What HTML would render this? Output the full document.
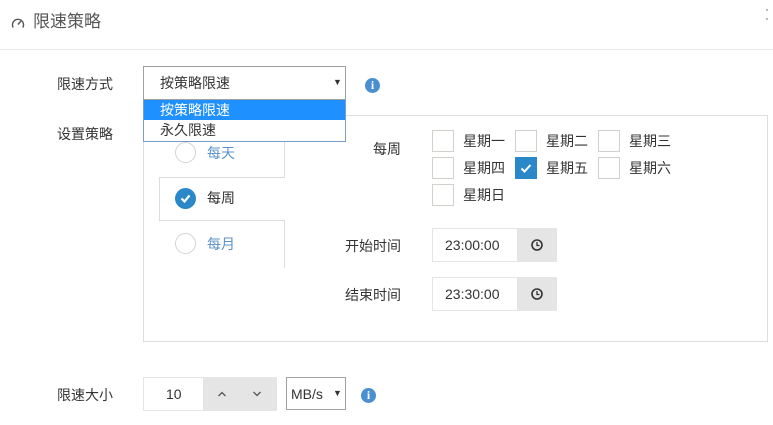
<!DOCTYPE html>
<html><head><meta charset="utf-8"><style>
*{box-sizing:border-box;margin:0;padding:0}
body{width:773px;height:425px;background:#fff;position:relative;overflow:hidden;font-family:"Liberation Sans","Noto Sans CJK SC",sans-serif;font-size:14px;color:#333}
.a{position:absolute}
.lbl{position:absolute;font-size:14px;color:#333;line-height:16px}
.cb{position:absolute;width:22px;height:22px;border:1px solid #d3cfcb;background:#fff}
.cbt{position:absolute;font-size:14px;line-height:16px;color:#333}
.info{position:absolute;width:15px;height:15px;border-radius:50%;background:#4a90d0;color:#fff;font:bold 12px/15px "Liberation Serif",serif;text-align:center}
.radio{position:absolute;width:21px;height:21px;border-radius:50%;border:1px solid #d6d3d0;background:#fff}
</style></head><body>
<svg class="a" style="left:11px;top:16px" width="14" height="14" viewBox="0 0 14 14"><path d="M2.2 11.5A5.5 5.5 0 1 1 11.8 11.5" fill="none" stroke="#555" stroke-width="1.4"/><path d="M7 8.5L9.8 5.2" stroke="#555" stroke-width="1.5"/></svg>
<div class="a" style="left:33px;top:12px;font-size:17px;color:#555;line-height:20px">限速策略</div>
<div class="a" style="left:0;top:49px;width:773px;height:1px;background:#e9e9e9"></div>
<div class="a" style="left:766px;top:9px;width:2px;height:2px;background:#bbb"></div>
<div class="a" style="left:766px;top:18px;width:2px;height:2px;background:#bbb"></div>

<div class="lbl" style="left:57px;top:76px">限速方式</div>
<div class="lbl" style="left:57px;top:126px">设置策略</div>

<div class="a" style="left:143px;top:115px;width:625px;height:227px;border:1px solid #ddd"></div>
<div class="a" style="left:144px;top:116px;width:140px;height:61px;background:#fff"></div>
<div class="a" style="left:284px;top:116px;width:1px;height:62px;background:#ddd"></div>
<div class="a" style="left:159px;top:177px;width:126px;height:1px;background:#ddd"></div>
<div class="a" style="left:159px;top:177px;width:1px;height:44px;background:#ddd"></div>
<div class="a" style="left:159px;top:220px;width:126px;height:1px;background:#ddd"></div>
<div class="a" style="left:284px;top:220px;width:1px;height:48px;background:#ddd"></div>
<div class="radio" style="left:175px;top:142px"></div>
<div class="lbl" style="left:207px;top:145px;color:#5b93c8">每天</div>
<div class="a" style="left:175px;top:188px;width:21px;height:21px;border-radius:50%;background:#2a88c8"></div>
<svg class="a" style="left:175px;top:188px" width="21" height="21"><path d="M6.5 10.5l3 3 5-6" fill="none" stroke="#fff" stroke-width="2.2"/></svg>
<div class="lbl" style="left:207px;top:190px">每周</div>
<div class="radio" style="left:175px;top:233px"></div>
<div class="lbl" style="left:207px;top:236px;color:#5b93c8">每月</div>

<div class="lbl" style="left:373px;top:141px">每周</div>
<div class="cb" style="left:432px;top:130px"></div><div class="cbt" style="left:463px;top:133px">星期一</div>
<div class="cb" style="left:515px;top:130px"></div><div class="cbt" style="left:546px;top:133px">星期二</div>
<div class="cb" style="left:598px;top:130px"></div><div class="cbt" style="left:629px;top:133px">星期三</div>
<div class="cb" style="left:432px;top:157px"></div><div class="cbt" style="left:463px;top:160px">星期四</div>
<div class="cb" style="left:515px;top:157px;background:#2a88c8;border-color:#2a88c8"></div>
<svg class="a" style="left:515px;top:157px" width="22" height="22"><path d="M6.5 11.5l3 3 6-6.5" fill="none" stroke="#fff" stroke-width="2"/></svg>
<div class="cbt" style="left:546px;top:160px">星期五</div>
<div class="cb" style="left:598px;top:157px"></div><div class="cbt" style="left:629px;top:160px">星期六</div>
<div class="cb" style="left:432px;top:184px"></div><div class="cbt" style="left:463px;top:187px">星期日</div>

<div class="lbl" style="left:345px;top:238px">开始时间</div>
<div class="a" style="left:432px;top:228px;width:125px;height:34px;border:1px solid #e5e5e5"></div>
<div class="a" style="left:517px;top:228px;width:40px;height:34px;background:#e5e5e5"></div>
<div class="a" style="left:445px;top:236px;font-size:14px;line-height:18px">23:00:00</div>
<svg class="a" style="left:530px;top:238px" width="14" height="14"><circle cx="7" cy="7" r="5" fill="none" stroke="#333" stroke-width="1.6"/><path d="M7 4v3.5h2.5" fill="none" stroke="#333" stroke-width="1.3"/></svg>

<div class="lbl" style="left:345px;top:287px">结束时间</div>
<div class="a" style="left:432px;top:277px;width:125px;height:34px;border:1px solid #e5e5e5"></div>
<div class="a" style="left:517px;top:277px;width:40px;height:34px;background:#e5e5e5"></div>
<div class="a" style="left:445px;top:285px;font-size:14px;line-height:18px">23:30:00</div>
<svg class="a" style="left:530px;top:287px" width="14" height="14"><circle cx="7" cy="7" r="5" fill="none" stroke="#333" stroke-width="1.6"/><path d="M7 4v3.5h2.5" fill="none" stroke="#333" stroke-width="1.3"/></svg>

<div class="a" style="left:143px;top:66px;width:203px;height:34px;border:1px solid #a0a0a0;background:#fff"></div>
<div class="a" style="left:160px;top:75px;font-size:14px;line-height:16px">按策略限速</div>
<div class="a" style="left:333px;top:77px;font-size:9px;line-height:10px">▼</div>
<div class="info" style="left:365px;top:78px">i</div>
<div class="a" style="left:143px;top:100px;width:203px;height:42px;border:1px solid #7a9cc8;border-top:none;background:#fff"></div>
<div class="a" style="left:144px;top:100px;width:201px;height:20px;background:#1e90ff"></div>
<div class="a" style="left:160px;top:102px;color:#fff;line-height:16px">按策略限速</div>
<div class="a" style="left:160px;top:122px;line-height:16px">永久限速</div>

<div class="lbl" style="left:57px;top:387px">限速大小</div>
<div class="a" style="left:143px;top:377px;width:134px;height:34px;border:1px solid #e5e5e5"></div>
<div class="a" style="left:203px;top:377px;width:74px;height:34px;background:#e5e5e5"></div>
<div class="a" style="left:166px;top:385px;font-size:14px;line-height:18px">10</div>
<svg class="a" style="left:217px;top:390px" width="10" height="8"><path d="M1.5 6L5 2.5 8.5 6" fill="none" stroke="#555" stroke-width="1.3"/></svg>
<svg class="a" style="left:252px;top:390px" width="10" height="8"><path d="M1.5 2L5 5.5 8.5 2" fill="none" stroke="#555" stroke-width="1.3"/></svg>
<div class="a" style="left:286px;top:377px;width:60px;height:33px;border:1px solid #a0a0a0"></div>
<div class="a" style="left:291px;top:386px;font-size:14px;line-height:16px">MB/s</div>
<div class="a" style="left:333px;top:388px;font-size:9px;line-height:10px">▼</div>
<div class="info" style="left:361px;top:388px">i</div>
</body></html>
